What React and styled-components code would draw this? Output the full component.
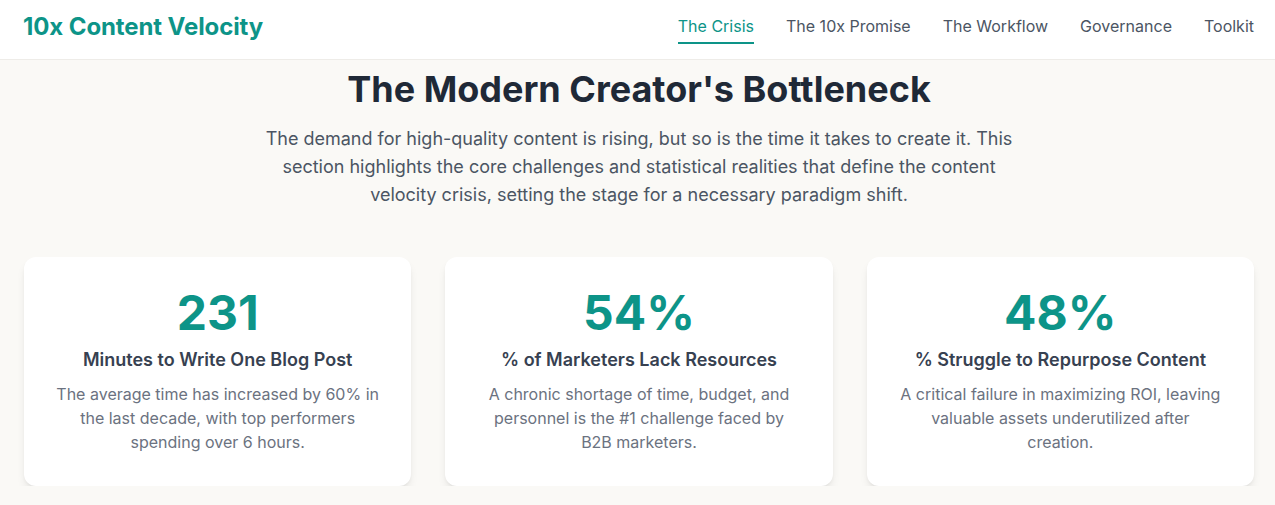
import styled, { createGlobalStyle } from 'styled-components';

const GlobalStyle = createGlobalStyle`
	* {
		box-sizing: border-box;
	}
	body {
		margin: 0;
		font-family: Inter, 'Liberation Sans', sans-serif;
		background: #faf9f6;
		color: #1f2937;
	}
`;

const TEAL = '#0d9488';

const Header = styled.header`
	height: 60px;
	display: flex;
	align-items: center;
	justify-content: space-between;
	padding: 0 21px 6px 23px;
	background: #ffffff;
	border-bottom: 1px solid #eeece8;
`;

const Logo = styled.div`
	font-size: 24px;
	line-height: 32px;
	font-weight: 700;
	letter-spacing: -0.1px;
	color: ${TEAL};
`;

const Nav = styled.nav`
	display: flex;
	gap: 32px;
	padding-top: 1px;
`;

const NavLink = styled.a`
	font-size: 16px;
	line-height: 24px;
	padding: 3px 0 4px;
	border-bottom: 2px solid ${(p) => (p.$active ? TEAL : 'transparent')};
	color: ${(p) => (p.$active ? TEAL : '#4b5563')};
	text-decoration: none;
	cursor: pointer;
`;

const Section = styled.section`
	padding: 9px 21px 0 24px;
	text-align: center;
`;

const Title = styled.h2`
	margin: 0 0 16px;
	font-size: 36px;
	line-height: 40px;
	font-weight: 700;
	color: #1f2937;
`;

const Intro = styled.p`
	margin: 0 auto 48px;
	max-width: 768px;
	font-size: 18px;
	line-height: 28px;
	color: #4b5563;
`;

const Grid = styled.div`
	display: grid;
	grid-template-columns: repeat(3, 1fr);
	gap: 34px;
`;

const Card = styled.div`
	background: #ffffff;
	border-radius: 12px;
	padding: 32px;
	box-shadow: 0 6px 10px -2px rgba(0, 0, 0, 0.1), 0 2px 4px -2px rgba(0, 0, 0, 0.08);
`;

const Stat = styled.div`
	font-size: 48px;
	line-height: 48px;
	font-weight: 700;
	color: ${TEAL};
`;

const StatLabel = styled.h3`
	margin: 9px 0 8px;
	font-size: 18px;
	line-height: 28px;
	font-weight: 600;
	color: #374151;
`;

const StatText = styled.p`
	margin: 0;
	font-size: 16px;
	line-height: 24px;
	color: #6b7280;
`;

const links = ['The Crisis', 'The 10x Promise', 'The Workflow', 'Governance', 'Toolkit'];

const stats = [
	{
		value: '231',
		label: 'Minutes to Write One Blog Post',
		text: 'The average time has increased by 60% in the last decade, with top performers spending over 6 hours.',
	},
	{
		value: '54%',
		label: '% of Marketers Lack Resources',
		text: 'A chronic shortage of time, budget, and personnel is the #1 challenge faced by B2B marketers.',
	},
	{
		value: '48%',
		label: '% Struggle to Repurpose Content',
		text: 'A critical failure in maximizing ROI, leaving valuable assets underutilized after creation.',
	},
];

export default function App() {
	return (
		<>
			<GlobalStyle />
			<Header>
				<Logo>10x Content Velocity</Logo>
				<Nav>
					{links.map((l, i) => (
						<NavLink key={l} $active={i === 0}>
							{l}
						</NavLink>
					))}
				</Nav>
			</Header>
			<Section>
				<Title>The Modern Creator's Bottleneck</Title>
				<Intro>
					The demand for high-quality content is rising, but so is the time it takes to
					create it. This section highlights the core challenges and statistical realities
					that define the content velocity crisis, setting the stage for a necessary
					paradigm shift.
				</Intro>
				<Grid>
					{stats.map((s) => (
						<Card key={s.value}>
							<Stat>{s.value}</Stat>
							<StatLabel>{s.label}</StatLabel>
							<StatText>{s.text}</StatText>
						</Card>
					))}
				</Grid>
			</Section>
		</>
	);
}
